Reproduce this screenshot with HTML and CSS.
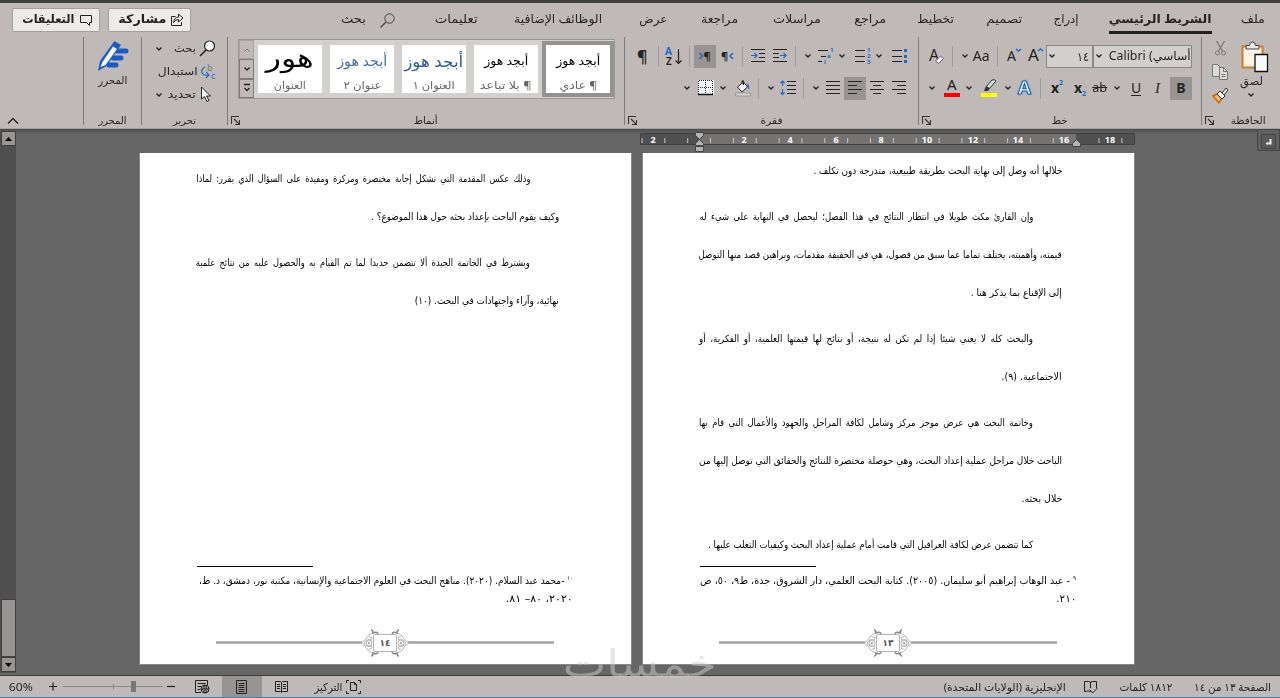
FILE: index.html
```html
<!DOCTYPE html>
<html lang="ar" dir="rtl">
<head>
    <meta charset="UTF-8">
    <title>الشريط الرئيسي</title>
    <link rel="stylesheet" href="styles.css">
</head>
<body>
<!-- shared icons -->
<svg class="defs" width="0" height="0">
    <symbol id="chev" viewBox="0 0 8 8"><path d="M1.500 2.500 4 5l2.500-2.500" fill="none" stroke="#262626" stroke-width="1.400"/></symbol>
    <symbol id="launch" viewBox="0 0 9 9"><path d="M.5 8V.5H8M3 3l5 5M8.500 4v4.500H4" fill="none" stroke="#333" stroke-width="1.100"/></symbol>
    <symbol id="frame" viewBox="0 0 338 28">
        <path d="M0 13.500h146M192 13.500h146" stroke="#a2a2a2" stroke-width="2.500"/>
        <g fill="none" stroke="#b4b4b4">
            <path d="M158 5.500h22M158 22.500h22M157.500 6v16M180.500 6v16"/>
            <g id="orn">
                <path d="M145 14q5-3 6-6 2-3 6-4M145 14q5 3 6 6 2 3 6 4M148 14q3-5 8-3M148 14q3 5 8 3"/>
                <circle cx="153" cy="14" r="3"/><circle cx="153" cy="14" r="1" fill="#999"/>
                <path d="M153 8q3-1 3 2M153 20q3 1 3-2"/>
                <path d="M155 1q2 0 2 3 4-2 5 1M155 27q2 0 2-3 4 2 5-1" stroke="#888" stroke-width="1.500"/>
            </g>
            <use href="#orn" transform="translate(338 0) scale(-1 1)"/>
        </g>
    </symbol>
</svg>

<header class="ribbon">
    <nav class="tabs">
        <button class="pill"><b data-w="52">التعليقات</b><svg width="12" height="12"><path d="M.5 1.500h11v7H9.500v3l-3-3h-6z" fill="none" stroke="#222"/></svg></button>
        <button class="pill"><b data-w="48">مشاركة</b><svg width="13" height="13"><path d="M4.500 3.500h-4v9h10V9M2.500 9.500q.5-5 5-5.500V1l4.500 4-4.500 4V6.500Q4 6.500 2.500 9.500z" fill="none" stroke="#222"/></svg></button>
        <span data-w="25">بحث</span>
        <svg width="15" height="15"><circle cx="9.500" cy="5.500" r="4.700" fill="none" stroke="#444"/><path d="M6 9 .5 14.500" stroke="#444" stroke-width="1.300"/></svg>
        <span data-w="43">تعليمات</span>
        <span data-w="88">الوظائف الإضافية</span>
        <span data-w="28">عرض</span>
        <span data-w="37">مراجعة</span>
        <span data-w="48">مراسلات</span>
        <span data-w="32">مراجع</span>
        <span data-w="37">تخطيط</span>
        <span data-w="36">تصميم</span>
        <span data-w="25">إدراج</span>
        <span class="current"><b data-w="103">الشريط الرئيسي</b></span>
        <span data-w="24">ملف</span>
    </nav>

    <div class="groups">
        <section class="group collapse">
            <svg width="12" height="8"><path d="M1 6.500 6 1.500l5 5" fill="none" stroke="#222" stroke-width="1.300"/></svg>
        </section>

        <section class="group editor">
            <svg width="32" height="32" viewBox="0 0 32 32">
                <path d="M20 11h9M16 18h8M12 25h7" stroke="#1a5cc0" stroke-width="5" stroke-linecap="round"/>
                <path d="m1 31 2-10L17.500 1l6.500 4L9.500 26z" fill="#1a5cc0"/>
                <path d="m3.500 27 2-5L16 6.500l4 2.500L8.500 25z" fill="#f4f8fb"/>
            </svg>
            <span data-w="29">المحرر</span>
            <h2><span data-w="28">المحرر</span></h2>
        </section>

        <section class="group editing">
            <div class="edit-row"><svg width="8" height="8"><use href="#chev"/></svg><span data-w="22">بحث</span><svg width="17" height="17"><path d="m7 10-6 6" stroke="#222" stroke-width="1.600"/><circle cx="10.500" cy="6" r="5" fill="#f6fafc" stroke="#222" stroke-width="1.200"/></svg></div>
            <div class="edit-row"><i></i><span data-w="40">استبدال</span><svg width="16" height="17"><text x="6" y="8" font-size="9" fill="#777">b</text><text x="10" y="16" font-size="9" fill="#1f6ac9">c</text><path d="M4 4q-4 2-3 6 2 3 6 2M5 9l3 3-3 3" fill="none" stroke="#1f6ac9" stroke-width="1.200"/></svg></div>
            <div class="edit-row"><svg width="8" height="8"><use href="#chev"/></svg><span data-w="28">تحديد</span><svg width="13" height="17"><path d="M2.500 1v12l3-2.500 2.500 5 2-1-2.500-4.500h4z" fill="#f6fafc" stroke="#222"/></svg></div>
            <h2><span data-w="23">تحرير</span></h2>
        </section>

        <section class="group styles">
            <div class="gallery">
                <div class="scroll">
                    <span class="off"><svg width="8" height="8"><path d="M1.500 5.500 4 3l2.500 2.500" fill="none" stroke="#777"/></svg></span>
                    <span><svg width="8" height="8"><use href="#chev"/></svg></span>
                    <span><svg width="8" height="10"><path d="M1 1.500h6M1.500 5 4 7.500 6.500 5" fill="none" stroke="#222" stroke-width="1.300"/></svg></span>
                </div>
                <div class="card title"><em data-w="48">هور</em><span data-w="32">العنوان</span></div>
                <div class="card h-two"><em data-w="50">أبجد هوز</em><span data-w="38">عنوان ٢</span></div>
                <div class="card h-one"><em data-w="59">أبجد هوز</em><span data-w="42">العنوان ١</span></div>
                <div class="card"><em data-w="44">أبجد هوز</em><span data-w="52">¶ بلا تباعد</span></div>
                <div class="card selected"><em data-w="44">أبجد هوز</em><span data-w="38">¶ عادي</span></div>
            </div>
            <h2><span data-w="24">أنماط</span></h2>
            <svg class="launcher" width="9" height="9"><use href="#launch"/></svg>
        </section>

        <section class="group para">
            <div class="row p-one">
                <b class="pil">¶</b>
                <i class="sep"></i>
                <svg width="18" height="19"><text x="0" y="8" font-size="10" font-weight="700" fill="#1f6ac9">A</text><text x="1" y="18" font-size="10" font-weight="600">Z</text><path d="M13.500 2v15M10.500 13.500l3 3 3-3" fill="none" stroke="#222" stroke-width="1.200"/></svg>
                <i class="sep"></i>
                <span class="on"><svg width="14" height="14"><path d="m1.500 4 3 3-3 3" fill="none" stroke="#1f6ac9" stroke-width="1.500"/><text x="5.500" y="11" font-size="11" font-weight="700">¶</text></svg></span>
                <svg width="14" height="14"><text x="0" y="11" font-size="11" font-weight="700">¶</text><path d="m12 4-3 3 3 3" fill="none" stroke="#1f6ac9" stroke-width="1.500"/></svg>
                <i class="sep"></i>
                <svg width="15" height="14"><path d="M0 .5h14M8 4.500h6M8 8.500h6M0 12.500h14" stroke="#222" stroke-width="1.200"/><path d="M0 6.500h6M3.500 4 6 6.500 3.500 9" fill="none" stroke="#1f6ac9" stroke-width="1.200"/></svg>
                <svg width="15" height="14"><path d="M0 .5h14M0 4.500h6M0 8.500h6M0 12.500h14" stroke="#222" stroke-width="1.200"/><path d="M7 6.500h6M10.500 4 13 6.500 10.500 9" fill="none" stroke="#1f6ac9" stroke-width="1.200"/></svg>
                <i class="sep"></i>
                <svg width="8" height="8"><use href="#chev"/></svg>
                <svg width="16" height="18"><path d="M0 3.500h10M3 9.500h5M0 14.500h4" stroke="#222" stroke-width="1.200"/><g font-size="6" font-weight="700" fill="#1f6ac9"><text x="12" y="5">1</text><text x="9" y="11">a</text><text x="6" y="17">i</text></g></svg>
                <svg width="8" height="8"><use href="#chev"/></svg>
                <svg width="16" height="18"><path d="M0 3.500h10M0 9.500h10M0 14.500h10" stroke="#222" stroke-width="1.200"/><g font-size="6" font-weight="700" fill="#1f6ac9"><text x="12" y="5">1</text><text x="12" y="11">2</text><text x="12" y="17">3</text></g></svg>
                <svg width="8" height="8"><use href="#chev"/></svg>
                <svg width="16" height="16"><path d="M0 2.500h10M0 8.500h10M0 13.500h10" stroke="#222" stroke-width="1.200"/><path d="M12 1h3v3h-3zM12 7h3v3h-3zM12 12h3v3h-3z" fill="#1f6ac9"/></svg>
            </div>
            <div class="row p-two">
                <svg width="8" height="8"><use href="#chev"/></svg>
                <svg width="16" height="16"><path d="M0 0h16v15H0z" fill="#f4f8fb"/><path d="M.5 14V.5h14V14M7.500 0v14M0 7.500h15" fill="none" stroke="#222" stroke-dasharray="1 1"/><path d="M0 14.500h15" stroke="#111" stroke-width="1.500"/></svg>
                <svg width="8" height="8"><use href="#chev"/></svg>
                <svg width="17" height="17"><path d="m2.500 7 6-5 4 5-5.500 5z" fill="#f4f8fb" stroke="#222"/><path d="M8.500 5V.8H7V4" fill="none" stroke="#222"/><path d="M12 3q3 2 2 7-2-3-2-7" fill="#1f6ac9"/><path d="M.5 13h15v3H.5z" fill="#d4d2d0" stroke="#999"/></svg>
                <i class="sep"></i>
                <svg width="8" height="8"><use href="#chev"/></svg>
                <svg width="17" height="16"><path d="M7 1.500h9M7 5.500h9M7 9.500h9M7 13.500h9" stroke="#222" stroke-width="1.200"/><path d="M2.500 1v5M.5 3l2-2 2 2M2.500 9v6M.5 12.500l2 2 2-2" fill="none" stroke="#1f6ac9" stroke-width="1.200"/></svg>
                <i class="sep"></i>
                <svg width="8" height="8"><use href="#chev"/></svg>
                <svg width="14" height="14"><path d="M0 .5h14M0 4.500h14M0 8.500h14M0 12.500h14" stroke="#222" stroke-width="1.200"/></svg>
                <span class="on"><svg width="14" height="14"><path d="M0 .5h14M0 4.500h9M0 8.500h14M0 12.500h9" stroke="#222" stroke-width="1.200"/></svg></span>
                <svg width="14" height="14"><path d="M0 .5h14M3 4.500h8M0 8.500h14M3 12.500h8" stroke="#222" stroke-width="1.200"/></svg>
                <svg width="14" height="14"><path d="M0 .5h14M5 4.500h9M0 8.500h14M5 12.500h9" stroke="#222" stroke-width="1.200"/></svg>
            </div>
            <h2><span data-w="22">فقرة</span></h2>
            <svg class="launcher" width="9" height="9"><use href="#launch"/></svg>
        </section>

        <section class="group font">
            <div class="row f-one">
                <svg width="18" height="20"><text x="1" y="15" font-size="17" textLength="10" lengthAdjust="spacingAndGlyphs">A</text><path d="m7.500 15 5-5 3 2.500-5 5z" fill="#eee" stroke="#667"/></svg>
                <i class="sep"></i>
                <svg width="8" height="8"><use href="#chev"/></svg>
                <span class="latin" data-w="17">Aa</span>
                <i class="sep"></i>
                <svg width="16" height="20"><text x="0" y="15" font-size="14">A</text><path d="m9 3 2.500 2L14 3" fill="none" stroke="#1f6ac9" stroke-width="1.500"/></svg>
                <svg width="16" height="20"><text x="0" y="15" font-size="17">A</text><path d="m10 5 2.500-2L15 5" fill="none" stroke="#1f6ac9" stroke-width="1.500"/></svg>
                <div class="combo size"><svg width="8" height="8"><use href="#chev"/></svg><span data-w="12">١٤</span></div>
                <div class="combo name"><svg width="8" height="8"><use href="#chev"/></svg><span class="face" data-w="82">Calibri (أساسي</span></div>
            </div>
            <div class="row f-two">
                <svg width="8" height="8"><use href="#chev"/></svg>
                <svg width="16" height="18"><text x="3" y="11" font-size="15">A</text><path d="M0 14h16v4H0z" fill="#f00"/></svg>
                <svg width="8" height="8"><use href="#chev"/></svg>
                <svg width="17" height="18"><path d="m5 8 6-7q3-1 4 1L8 10z" fill="#ddd" stroke="#333"/><path d="m5 7-2 5h4l2-3z" fill="#333"/><path d="M0 14h16v4H0z" fill="#ff0"/></svg>
                <svg width="8" height="8"><use href="#chev"/></svg>
                <svg width="16" height="18"><text class="glow" x="1" y="15" font-size="18" font-weight="700" fill="#eef6ff" stroke="#1f5fa8" textLength="13" lengthAdjust="spacingAndGlyphs">A</text></svg>
                <i class="sep"></i>
                <svg width="15" height="20"><text x="0" y="15" font-size="14" font-weight="700">x</text><text x="8" y="7" font-size="7" font-weight="700" fill="#1f6ac9">2</text></svg>
                <svg width="15" height="20"><text x="0" y="15" font-size="14" font-weight="700">x</text><text x="8" y="18" font-size="7" font-weight="700" fill="#1f6ac9">2</text></svg>
                <span class="latin ab" data-w="15">ab</span>
                <svg width="8" height="8"><use href="#chev"/></svg>
                <span class="latin under">U</span>
                <span class="latin it">I</span>
                <span class="on"><b class="latin">B</b></span>
            </div>
            <h2><span data-w="16">خط</span></h2>
            <svg class="launcher" width="9" height="9"><use href="#launch"/></svg>
        </section>

        <section class="group clip">
            <div class="small-tools">
                <svg width="14" height="17"><path d="M2.500 1l6 10M10.500 1l-6 10" stroke="#777" stroke-width="1.200"/><circle cx="3.500" cy="13" r="2" fill="none" stroke="#777"/><circle cx="9.500" cy="13" r="2" fill="none" stroke="#777"/></svg>
                <svg width="17" height="17"><path d="M.5.500h5l2 2v10h-7zM7.500 3.500h4l4 4v8h-8z" fill="#dddbd9" stroke="#777"/><path d="M11.500 3.500v4h4M9.500 10.500h4M9.500 12.500h4" fill="none" stroke="#777"/></svg>
                <svg width="17" height="17"><path d="m1 9 4-2 5 4-3 5z" fill="#f5b56d" stroke="#c5691a" stroke-width="1.500"/><path d="m5 7 3-3 5 5-3 3z" fill="#fff" stroke="#333"/><path d="m10 6 4-5 2 2-4 5z" fill="#eee" stroke="#333"/></svg>
            </div>
            <div class="paste">
                <svg width="28" height="31"><path d="M1.500 5.500h20v21h-20z" fill="#fbf3e6" stroke="#d07a2c" stroke-width="2"/><path d="M5 8V4.500h3.500q0-3.500 3-3.500t3 3.500H18V8z" fill="#e8e8e8" stroke="#444"/><path d="M14 13.500h12.500v17H14z" fill="#f6fafc" stroke="#111" stroke-width="1.300"/></svg>
                <span data-w="23">لصق</span>
                <svg width="8" height="8"><use href="#chev"/></svg>
            </div>
            <h2><span data-w="35">الحافظة</span></h2>
            <svg class="launcher" width="9" height="9"><use href="#launch"/></svg>
        </section>
    </div>
</header>

<main class="workspace">
    <div class="scrollbar">
        <span class="arrow"><svg width="7" height="4"><path d="M0 4 3.500 0 7 4z"/></svg></span>
        <span class="thumb"></span>
        <span class="arrow"><svg width="7" height="4"><path d="m0 0 3.500 4L7 0z"/></svg></span>
    </div>
    <div class="desk">
        <svg class="ruler" width="496" height="24">
            <defs><pattern id="ticks" x="1.500" width="22.850" height="5" y="9" patternUnits="userSpaceOnUse"><path d="M.5 0v5" stroke="#c8c8c8"/></pattern></defs>
            <path d="M.5 4.500h494v11H.5z" fill="#505050" stroke="#404040"/>
            <path d="M59 5h377v10H59z" fill="#757371"/>
            <path d="M1 9h55v5H1zM64 9h366v5H64zM440 9h54v5h-54z" fill="url(#ticks)"/>
            <g class="nums">
                <text x="13" y="14">2</text><text x="104" y="14">2</text><text x="150" y="14">4</text><text x="196" y="14">6</text><text x="241" y="14">8</text><text x="287" y="14">10</text><text x="333" y="14">12</text><text x="378" y="14">14</text><text x="424" y="14">16</text><text x="470" y="14">18</text>
            </g>
            <path d="M55.500 3.500h8v3l-4 4-4-4zM55.500 16.500v-2l4-4 4 4v2zM55.500 17.500h8v5h-8zM432.500 17.500v-3l4-4 4 4v3z" fill="#b5b3b1" stroke="#444"/>
        </svg>
        <div class="pages">
            <article class="page right">
                <p><span data-w="249">خلالها أنه وصل إلى نهاية البحث بطريقة طبيعية، متدرجة دون تكلف .</span></p>
                <p class="indent"><span class="wide" data-w="334">وإن القارئ مكث طويلا في انتظار النتائج في هذا الفصل؛ ليحصل في النهاية على شيء له</span>
                    <span data-w="363">قيمته، وأهميته، يختلف تماما عما سبق من فصول، هي في الحقيقة مقدمات، وبراهين قصد منها التوصل</span>
                    <span data-w="91">إلى الإقناع بما يذكر هنا .</span></p>
                <p class="indent"><span class="wide" data-w="334">والبحث كله لا يعني شيئا إذا لم تكن له نتيجة، أو نتائج لها قيمتها العلمية، أو الفكرية، أو</span>
                    <span data-w="60">الاجتماعية. (٩).</span></p>
                <p class="indent"><span class="wide" data-w="334">وخاتمة البحث هي عرض موجز مركز وشامل لكافة المراحل والجهود والأعمال التي قام بها</span>
                    <span data-w="363">الباحث خلال مراحل عملية إعداد البحث، وهي حوصلة مختصرة للنتائج والحقائق التي توصل إليها من</span>
                    <span data-w="41">خلال بحثه.</span></p>
                <p class="indent"><span data-w="325">كما تتضمن عرض لكافة العراقيل التي قامت أمام عملية إعداد البحث وكيفيات التغلب عليها .</span></p>
                <aside class="notes">
                    <span data-w="376"><sup>٩</sup> - عبد الوهاب إبراهيم أبو سليمان. (٢٠٠٥). كتابة البحث العلمي، دار الشروق، جدة، ط٩، ٥٠، ص</span>
                    <span data-w="20">٢١٠.</span>
                </aside>
                <footer><svg width="338" height="28"><use href="#frame"/></svg><b>١٣</b></footer>
            </article>
            <article class="page left">
                <p class="indent"><span class="wide" data-w="334">وذلك عكس المقدمة التي تشكل إجابة مختصرة ومركزة ومفيدة على السؤال الذي يقرر: لماذا</span>
                    <span data-w="188">وكيف يقوم الباحث بإعداد بحثه حول هذا الموضوع؟ .</span></p>
                <p class="indent"><span class="wide" data-w="334">ويشترط في الخاتمة الجيدة ألا تتضمن جديدا لما تم القيام به والحصول عليه من نتائج علمية</span>
                    <span data-w="144">نهائية، وآراء واجتهادات في البحث. (١٠)</span></p>
                <aside class="notes">
                    <span data-w="374"><sup>١٠</sup> -محمد عبد السلام. (٢٠٢٠). مناهج البحث في العلوم الاجتماعية والإنسانية، مكتبة نور، دمشق، د. ط،</span>
                    <span data-w="67">٢٠٢٠، ٨٠– ٨١.</span>
                </aside>
                <footer><svg width="338" height="28"><use href="#frame"/></svg><b>١٤</b></footer>
            </article>
        </div>
    </div>
    <div class="tabstop"><svg width="15" height="15"><path d="M.5.500h14v14H.5z" fill="#5a5a5a" stroke="#444"/><path d="M5 9.500h4.500V5" fill="none" stroke="#eee" stroke-width="2"/></svg></div>
</main>

<footer class="status">
    <span class="latin" data-w="24">60%</span>
    <svg width="9" height="9"><path d="M0 4.500h8M4 .5v8" stroke="#222" stroke-width="1.200"/></svg>
    <svg width="100" height="13"><path d="M0 6.500h100M50.500 4v5" stroke="#8a8786"/><path d="M68 1h5v11h-5z" fill="#7a7776"/></svg>
    <svg width="9" height="9"><path d="M0 4.500h8" stroke="#222" stroke-width="1.200"/></svg>
    <svg width="15" height="14"><path d="M.5 12.500V.5h12V5M.5 12.500H6M2.500 3.500h8M2.500 6.500h4M2.500 9.500h3" fill="none" stroke="#222"/><circle cx="10" cy="9" r="4" fill="#bfbab7" stroke="#222"/><path d="M6 9h8M10 5v8" stroke="#222"/><ellipse cx="10" cy="9" rx="2" ry="4" fill="none" stroke="#222" stroke-width=".7"/></svg>
    <span class="view-on"><svg width="12" height="14"><path d="M.5.500h10v13H.5zM2.500 3.500h6M2.500 5.500h6M2.500 7.500h6M2.500 9.500h6M2.500 11.500h6" fill="none" stroke="#222"/></svg></span>
    <svg width="14" height="13"><path d="M.5 1.500h5l1 1 1-1h5v10h-5l-1 1-1-1h-5zM6.500 2v10M2 4.500h3M2 6.500h3M2 8.500h3M8 4.500h3M8 6.500h3M8 8.500h3" fill="none" stroke="#222"/></svg>
    <span data-w="28">التركيز</span>
    <svg width="15" height="14"><path d="M3 .5H.5V3M12 .5h2.500V3M.5 11v2.500H3M14.500 11v2.500H12M4.500 2.500h4l2 2v6h-6zM8.500 2.500v2h2" fill="none" stroke="#222"/></svg>
    <span data-w="122">الإنجليزية (الولايات المتحدة)</span>
    <svg width="15" height="14"><path d="M6.500 11.500q-2-1-6 0V1.500h4q2 0 2 1.500 0-1.500 2-1.500h4V8M6.500 2v6M5.500 9.500l3 3.500 5-5" fill="none" stroke="#222"/></svg>
    <span data-w="53">١٨١٢ كلمات</span>
    <span data-w="77">الصفحة ١٣ من ١٤</span>
</footer>
<div class="mark"><span data-w="154">خمسات</span></div>

<script src="fit.js"></script>
</body>
</html>
```
FILE: styles.css
```css
* { box-sizing: border-box; }
body {
    margin: 0;
    width: 1280px;
    height: 698px;
    overflow: hidden;
    position: relative;
    display: flex;
    flex-direction: column;
    background: #666;
    color: #262626;
    font-family: "Noto Sans", "DejaVu Sans", sans-serif;
    font-size: 12px;
    white-space: nowrap;
}
svg { display: block; flex: none; direction: ltr; overflow: visible; }
svg text { fill: #222; }
svg [fill="#1f6ac9"] text, svg text[fill="#1f6ac9"] { fill: #1f6ac9; }
svg text[fill="#777"] { fill: #777; }
svg .glow { fill: #eef6ff; filter: drop-shadow(0 0 1px #5fa4e8); }
.defs { position: absolute; }
i, em { font-style: normal; }
[data-w] { display: inline-block; transform-origin: right center; }

/* Ribbon */
.ribbon { height: 129px; border-top: 3px solid #414141; background: #bfbab7; border-bottom: 1px solid #a5a19e; direction: ltr; }
.tabs {
    display: grid;
    grid-template-columns: 96px 233px 39px 55px 79px 125px 62px 72px 81px 63px 69px 68px 55px 132px 24px;
    height: 34px;
    padding-left: 12px;
    align-items: center;
    justify-items: start;
}
.tabs > span { margin-top: -3px; }
.tabs > .current { margin-top: 0; }
.pill {
    display: flex;
    align-items: center;
    justify-content: space-between;
    height: 24px;
    padding: 0 7px 3px 9px;
    border: 1px solid #a3a09e;
    border-radius: 2px;
    background: #edebe9;
    color: #222;
    font: 12px "Noto Sans", "DejaVu Sans", sans-serif;
}
.pill svg { margin-top: 2px; }
.pill:first-child { width: 88px; }
.pill:nth-child(2) { width: 83px; padding-right: 6px; }
.current { height: 28px; padding-top: 4px; border-bottom: 3px solid #222; }

.groups { display: flex; height: 88px; }
.group { position: relative; border-right: 1px solid #7f7b79; flex: none; }
.group h2 {
    position: absolute;
    left: 0;
    right: 0;
    bottom: -3px;
    margin: 0;
    text-align: center;
    font-size: 10px;
    font-weight: normal;
    line-height: 16px;
}
.launcher { position: absolute; left: 3px; bottom: 0; }
.collapse { width: 84px; display: flex; align-items: flex-end; padding: 0 0 0 7px; }
.editor { width: 58px; display: flex; flex-direction: column; align-items: center; padding-top: 3px; font-size: 11px; }
.editing { width: 86px; padding: 0 12px 0 13px; font-size: 11px; }
.edit-row { display: grid; grid-template-columns: 1fr auto 16px; column-gap: 3px; align-items: center; height: 23px; }
.edit-row span { margin-top: -2px; }
.styles { width: 397px; padding: 2px 9px 0 10px; }
.gallery { display: flex; height: 60px; border: 1px solid #9a9795; background: #d2d1cf; }
.scroll { display: flex; flex-direction: column; width: 15px; background: #bfbab7; }
.scroll span { flex: 1; display: flex; align-items: center; justify-content: center; border: 1px solid #7f7b79; }
.scroll .off { border-color: #a8a5a3; }
.card {
    width: 64px;
    height: 48px;
    margin: 5px 4px;
    display: flex;
    flex-direction: column;
    align-items: center;
    justify-content: space-between;
    background: #fff;
    color: #666;
    font-size: 11px;
    line-height: 16px;
    direction: rtl;
}
.card em { color: #000; font-size: 12px; line-height: 32px; height: 32px; }
.card.selected { outline: 4px solid #959391; }
.card.h-two em { color: #4a6f9e; font-size: 14px; }
.card.h-one em { color: #2f5a92; font-size: 16px; }
.card.title em { font-size: 26px; line-height: 24px; }

.row { display: grid; height: 32px; align-items: center; justify-items: start; }
.sep { width: 1px; height: 21px; background: #a09c9a; }
.on { width: 22px; height: 23px; display: flex; align-items: center; justify-content: center; background: #979492; }
.latin { font-size: 14px; line-height: 18px; font-family: "Noto Sans", sans-serif; }
.para { width: 294px; padding-top: 3px; }
.p-one { grid-template-columns: 21px 7px 24px 5px 27px 21px 9px 22px 22px 9px 14px 20px 17px 20px 17px 16px; padding-left: 12px; }
.p-two { grid-template-columns: 15px 21px 16px 23px 9px 13px 23px 9px 14px 18px 26px 22px 16px; padding-left: 58px; }
.pil { font-size: 16px; line-height: 20px; }
.font { width: 283px; padding-top: 3px; }
.f-one { grid-template-columns: 24px 9px 12px 24px 10px 21px 18px 47px 99px; padding-left: 9px; }
.f-two { grid-template-columns: 16px 21px 16px 23px 13px 23px 11px 23px 18px 21px 18px 24px 15px 22px; padding-left: 9px; }
.ab { text-decoration: line-through; font-size: 12px; }
.under { border-bottom: 1px solid #222; line-height: 14px; }
.it { font-family: "Liberation Serif", serif; font-style: italic; font-size: 15px; }
.combo {
    display: flex;
    align-items: center;
    justify-content: space-between;
    height: 23px;
    border: 1px solid #8b8886;
    background: #d2d0ce;
    padding: 0 3px 0 1px;
}
.combo.size { width: 47px; }
.combo.name { width: 99px; padding-right: 0; }
.face { font-size: 12px; line-height: 20px; }
.clip { width: 79px; display: flex; border-right: 0; padding-left: 10px; }
.small-tools { display: flex; flex-direction: column; justify-content: space-between; align-items: center; width: 17px; height: 64px; margin-top: 3px; }
.paste { display: flex; flex-direction: column; align-items: center; margin: 4px 0 0 11px; }
.paste span { margin: 0 6px 2px 0; line-height: 17px; }
.paste svg:last-child { margin-right: 7px; }
.clip h2 { right: 0; left: 14px; }

/* Document area */
.workspace { display: flex; height: 546px; direction: ltr; background: linear-gradient(#4c4c4c, #666 5px); }
.scrollbar { width: 16px; height: 544px; padding: 2px 0 1px 1px; display: flex; flex-direction: column; background: #4f4f4f; }
.arrow { display: flex; align-items: center; justify-content: center; width: 15px; height: 15px; background: #979593; border: 1px solid #404040; }
.thumb { width: 15px; height: 58px; margin-top: auto; background: #979593; border: 1px solid #404040; }
.desk { width: 1241px; padding-left: 123px; }
.ruler { margin-left: 501px; }
.nums { font: 700 9px "Noto Sans", sans-serif; text-anchor: middle; }
.nums text { fill: #fff; }
.pages { display: flex; flex-direction: row-reverse; justify-content: flex-end; gap: 10px; }
.page {
    position: relative;
    width: 493px;
    height: 512px;
    border: 1px solid #888;
    border-top: 0;
    background: #fff;
    direction: rtl;
    padding: 0 72px 0 0;
    color: #000;
    font-family: "DejaVu Sans", sans-serif;
    font-size: 10px;
}
.page.left { padding-top: 7px; }
.page p { margin: 0 0 8px; line-height: 38px; }
.page.right p:first-child { margin-top: -1px; }
.page p span { display: block; width: max-content; }
.page p.indent > span:first-child { margin-right: 29px; }
.wide { word-spacing: 2px; }
.notes { position: absolute; top: 413px; right: 58px; width: 377px; line-height: 18px; padding-top: 6px; }
.notes::before { content: ""; position: absolute; top: 0; left: 1px; width: 116px; height: 1px; background: #000; }
.notes span { display: block; width: max-content; }
.notes sup { font-size: 6px; line-height: 0; }
.page footer { position: absolute; left: 76px; top: 476px; width: 338px; height: 28px; }
.page footer b { position: absolute; left: 0; right: 0; top: 7px; text-align: center; font-size: 9px; line-height: 14px; color: #555; }
.tabstop { width: 23px; height: 22px; padding: 4px 0 0 3px; border: 1px solid #444; background: #606060; }

/* Status bar */
.status {
    display: grid;
    grid-template-columns: 40px 14px 104px 28px 27px 53px 39px 32px 598px 140px 35px 75px 77px;
    height: 23px;
    padding-left: 9px;
    align-items: center;
    justify-items: start;
    direction: ltr;
    background: #bfbab7;
    border-top: 1px solid #3f3f3f;
    border-bottom: 1px solid #4a7aab;
    font-size: 11px;
}
.status > span { direction: rtl; }
.status .latin { font-size: 11px; direction: ltr; }
.view-on { width: 40px; height: 21px; display: flex; align-items: center; justify-content: center; background: #979492; }
.mark { position: absolute; left: 563px; top: 632px; width: 154px; height: 64px; color: rgba(205, 205, 205, .5); font: 38px/64px "DejaVu Sans", sans-serif; }
```
FILE: fit.js
```js
// squeeze or stretch each text run to its own width
document.querySelectorAll('[data-w]').forEach((el) => {
    const want = Number(el.dataset.w);
    const have = el.getBoundingClientRect().width;
    el.style.transform = `scaleX(${want / have})`;
    el.style.marginLeft = `${want - have}px`;
});
```
